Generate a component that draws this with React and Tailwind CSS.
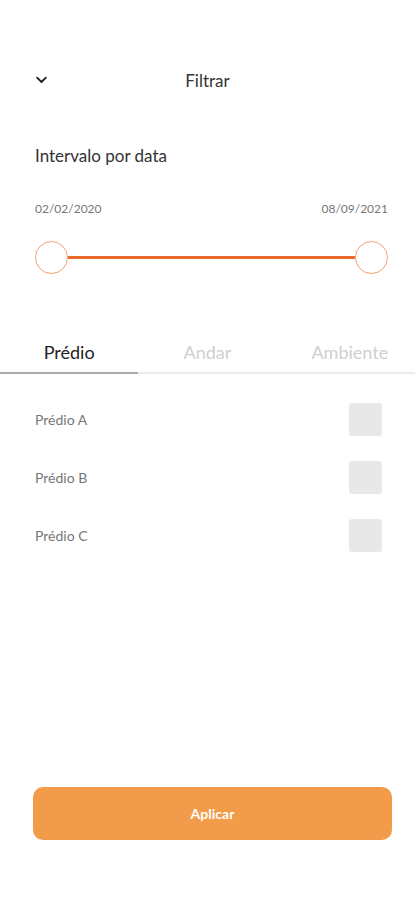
import React, { useState } from 'react';

const buildings = ['Prédio A', 'Prédio B', 'Prédio C'];
const tabs = ['Prédio', 'Andar', 'Ambiente'];

const App = () => {
  const [activeTab, setActiveTab] = useState(0);
  const [checked, setChecked] = useState({});

  return (
    <div className="min-h-[900px] w-[415px] bg-white flex flex-col font-['Lato',sans-serif]">
      {/* header */}
      <div className="relative flex items-center justify-center h-[30px] mt-[66px]">
        <button className="absolute left-[34px] top-[6px] text-[#222]">
          <svg width="15" height="15" viewBox="0 0 24 24" fill="none" stroke="currentColor" strokeWidth="3" strokeLinecap="round" strokeLinejoin="round">
            <path d="M5 9l7 7 7-7" />
          </svg>
        </button>
        <h1 className="text-[17px] text-[#333]">Filtrar</h1>
      </div>

      <div className="pl-[35px] pr-[27px] mt-[47px]">
        <h2 className="text-[17px] text-[#333]">Intervalo por data</h2>
        <div className="flex justify-between mt-[31px] text-[12px] text-[#777]">
          <span>02/02/2020</span>
          <span>08/09/2021</span>
        </div>
        <div className="flex items-center mt-[23px]">
          <div className="w-[33px] h-[33px] rounded-full border border-[#f2a06c] bg-white shrink-0" />
          <div className="flex-1 h-[3px] bg-[#ea6a2c]" />
          <div className="w-[33px] h-[33px] rounded-full border border-[#f2a06c] bg-white shrink-0" />
        </div>
      </div>

      {/* tabs */}
      <div className="grid grid-cols-3 mt-[60px] border-b-2 border-[#ebebeb]">
        {tabs.map((t, i) => (
          <button
            key={t}
            onClick={() => setActiveTab(i)}
            className={`h-[38px] text-[18px] relative ${i === activeTab ? 'text-[#222]' : 'text-[#cfcfcf]'} ${i === 2 ? 'pl-[8px]' : ''}`}
          >
            {t}
            {i === activeTab && <span className="absolute left-0 right-0 -bottom-[2px] h-[2px] bg-[#a9a9a9]" />}
          </button>
        ))}
      </div>

      {/* list */}
      <div className="pl-[35px] pr-[33px] mt-[29px] flex flex-col gap-[25px]">
        {buildings.map((b) => (
          <div key={b} className="flex items-center justify-between h-[33px]">
            <span className="text-[14px] text-[#777]">{b}</span>
            <button
              onClick={() => setChecked({ ...checked, [b]: !checked[b] })}
              className={`w-[33px] h-[33px] rounded-[3px] ${checked[b] ? 'bg-[#f29b4a]' : 'bg-[#e8e8e8]'}`}
            />
          </div>
        ))}
      </div>

      <div className="flex-1" />

      <div className="pl-[33px] pr-[23px] pb-[60px]">
        <button className="w-full h-[53px] rounded-[10px] bg-[#f29b4a] text-white text-[14px] font-bold">
          Aplicar
        </button>
      </div>
    </div>
  );
};

export default App;
